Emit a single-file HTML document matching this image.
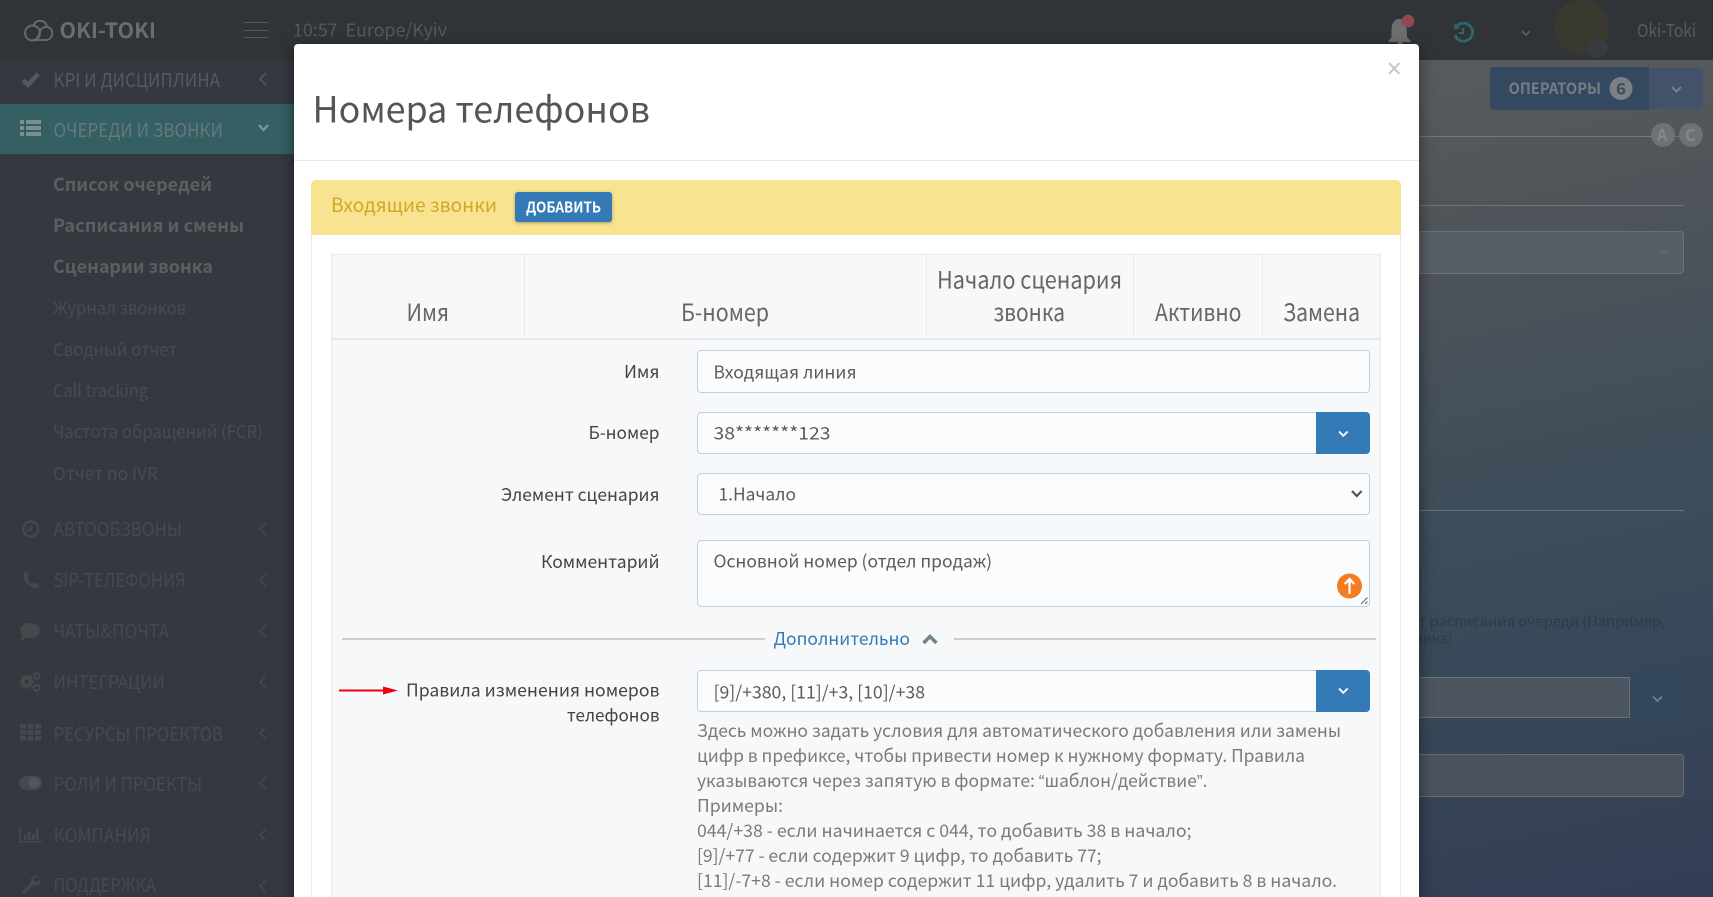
<!DOCTYPE html>
<html lang="ru"><head><meta charset="utf-8"><title>Номера телефонов</title>
<style>
html,body{margin:0;padding:0;width:1713px;height:897px;overflow:hidden;background:#333c55}
#root{position:relative;width:1713px;height:897px;overflow:hidden}
#root div{position:absolute;box-sizing:border-box}
svg{position:absolute;left:0;top:0}
text{font-family:"Noto Sans CJK SC","Liberation Sans",sans-serif;white-space:pre}
#bg{left:1419px;top:60px;width:294px;height:837px;background:linear-gradient(168deg,#585b5d 0,#4b5259 28%,#3d4d5a 52%,#374658 78%,#333c55 100%)}
#side{left:0;top:60px;width:294px;height:837px;background:#35393f}
#act{left:0;top:104px;width:294px;height:50px;background:linear-gradient(90deg,#335f63,#365f63)}
#top{left:0;top:0;width:1713px;height:60px;background:#303338}
#modal{left:294px;top:44px;width:1125px;height:853px;background:#fff;border-radius:4px 4px 0 0;box-shadow:0 5px 15px rgba(0,0,0,.5);overflow:hidden}
.in{background:#fbfcfd;border:1px solid #c3cddf;border-radius:4px}
.btn{background:#337ab7;border-radius:0 4px 4px 0}
</style></head><body>
<div id="root">
<div id="bg"></div>
<div style="left:1490px;top:67px;width:159px;height:43px;background:#34495f;border-radius:3px 0 0 3px"></div>
<div style="left:1649px;top:68px;width:54px;height:41px;background:#42526a;border-radius:0 3px 3px 0"></div>
<div style="left:1419px;top:231px;width:265px;height:43px;background:#575f66;border:1px solid #6d7175;border-radius:0 4px 4px 0"></div>
<div style="left:1419px;top:677px;width:211px;height:41px;background:#4c5560;border:1px solid #6c7177;border-left:0"></div>
<div style="left:1630px;top:677px;width:53px;height:41px;background:#33475d"></div>
<div style="left:1419px;top:754px;width:265px;height:43px;background:#4a525e;border:1px solid #6a6d72;border-left:0;border-radius:0 4px 4px 0"></div>
<div id="side"></div><div id="act"></div><div id="top"></div>

<svg width="1713" height="897" viewBox="0 0 1713 897">
 <!-- logo -->
 <g fill="none" stroke="#66686b" stroke-width="2">
  <circle cx="32.500" cy="33" r="7.500"/>
  <path d="M33.500 25.500a7 7 0 0 1 13.500 1"/>
  <path d="M47 26.800a6.700 6.700 0 0 1-.500 13.200H32.500"/>
  <path d="M47 27a6.700 6.700 0 0 0-7.500 5.500c-.500 3-2 5-3.500 7"/>
 </g>
 <text x="59.500" y="38" textLength="96.500" lengthAdjust="spacingAndGlyphs" font-size="21" font-weight="700" fill="#6a6c70">OKI-TOKI</text>
 <path d="M244 22.500h24M244 30.500h24M244 37.500h24" stroke="#55585c" stroke-width="1"/>
 <text x="293" y="36.500" textLength="154" lengthAdjust="spacingAndGlyphs" font-size="18" fill="#55585c">10:57  Europe/Kyiv</text>

 <!-- main menu -->
 <text x="53.500" y="87" textLength="166.500" lengthAdjust="spacingAndGlyphs" font-size="19" fill="#56595d">KPI И ДИСЦИПЛИНА</text>
 <text x="53.500" y="137" textLength="169.500" lengthAdjust="spacingAndGlyphs" font-size="19" fill="#63797c">ОЧЕРЕДИ И ЗВОНКИ</text>
 <g font-size="18" font-weight="700" fill="#5c5e62">
  <text x="53" y="191" textLength="159" lengthAdjust="spacingAndGlyphs">Список очередей</text>
  <text x="53" y="232" textLength="191" lengthAdjust="spacingAndGlyphs">Расписания и смены</text>
  <text x="53" y="273" textLength="160" lengthAdjust="spacingAndGlyphs">Сценарии звонка</text>
 </g>
 <g font-size="18" fill="#484b50">
  <text x="53" y="314.500" textLength="133" lengthAdjust="spacingAndGlyphs">Журнал звонков</text>
  <text x="53" y="356" textLength="124" lengthAdjust="spacingAndGlyphs">Сводный отчет</text>
  <text x="53" y="397" textLength="95" lengthAdjust="spacingAndGlyphs">Call tracking</text>
  <text x="53" y="438" textLength="210" lengthAdjust="spacingAndGlyphs">Частота обращений (FCR)</text>
  <text x="53" y="480" textLength="105" lengthAdjust="spacingAndGlyphs">Отчет по IVR</text>
 </g>
 <g font-size="19" fill="#46494e">
  <text x="53.500" y="536" textLength="128.500" lengthAdjust="spacingAndGlyphs">АВТООБЗВОНЫ</text>
  <text x="53.500" y="587" textLength="132.500" lengthAdjust="spacingAndGlyphs">SIP-ТЕЛЕФОНИЯ</text>
  <text x="53.500" y="638" textLength="115.500" lengthAdjust="spacingAndGlyphs">ЧАТЫ&amp;ПОЧТА</text>
  <text x="53.500" y="689" textLength="111.500" lengthAdjust="spacingAndGlyphs">ИНТЕГРАЦИИ</text>
  <text x="53.500" y="741" textLength="169.500" lengthAdjust="spacingAndGlyphs">РЕСУРСЫ ПРОЕКТОВ</text>
  <text x="53.500" y="791" textLength="148.500" lengthAdjust="spacingAndGlyphs">РОЛИ И ПРОЕКТЫ</text>
  <text x="53.500" y="842" textLength="97.500" lengthAdjust="spacingAndGlyphs">КОМПАНИЯ</text>
  <text x="53.500" y="892" textLength="102.500" lengthAdjust="spacingAndGlyphs">ПОДДЕРЖКА</text>
 </g>
 <!-- chevrons -->
 <g fill="none" stroke="#43464b" stroke-width="1.800">
  <path d="M266 73l-6 6 6 6" stroke="#505357"/>
  <path d="M266 523l-6 6 6 6M266 574l-6 6 6 6M266 625l-6 6 6 6M266 676l-6 6 6 6M266 727l-6 6 6 6M266 777l-6 6 6 6M266 829l-6 6 6 6M266 880l-6 6 6 6"/>
 </g>
 <path d="M259 125l4.500 5 4.500-5" fill="none" stroke="#7c9699" stroke-width="2.200"/>
 <!-- sidebar icons -->
 <path d="M23 80l5 5 10-11" fill="none" stroke="#55585c" stroke-width="4.500"/>
 <g fill="#7a8f90">
  <rect x="20" y="120" width="4" height="4"/><rect x="26" y="120" width="15" height="4"/>
  <rect x="20" y="126" width="4" height="4"/><rect x="26" y="126" width="15" height="4"/>
  <rect x="20" y="132" width="4" height="4"/><rect x="26" y="132" width="15" height="4"/>
 </g>
 <g fill="#45484d" stroke="none">
  <path d="M24 572.500c1.500-1.500 3-1 4 1l1 3c.3 1-1 2-1.500 3 1 2 2.500 3.500 4.500 4.500 1-.5 2-2 3-1.500l3 1.500c1.500 1 1.500 2.500 0 3.500-3 1.500-7 0-10.500-3.500S22 575.500 24 572.500z"/>
  <path d="M30 623c5.800 0 10 3.400 10 7.500s-4.200 7.500-10 7.500c-1 0-2 0-3-.300-2 1.600-4 2.300-7 2.300 2-1.500 2.500-2.800 2.500-4.500-1.600-1.300-2.500-3-2.500-5 0-4.100 4.200-7.500 10-7.500z"/>
  <rect x="20" y="724" width="6" height="4.500"/><rect x="27.500" y="724" width="6" height="4.500"/><rect x="35" y="724" width="6" height="4.500"/>
  <rect x="20" y="730" width="6" height="4.500"/><rect x="27.500" y="730" width="6" height="4.500"/><rect x="35" y="730" width="6" height="4.500"/>
  <rect x="20" y="736" width="6" height="4.500"/><rect x="27.500" y="736" width="6" height="4.500"/><rect x="35" y="736" width="6" height="4.500"/>
  <rect x="19" y="776" width="23" height="14" rx="7"/>
  <rect x="24" y="835" width="2.500" height="5"/><rect x="28" y="832" width="2.500" height="8"/><rect x="32" y="834" width="2.500" height="6"/><rect x="36" y="827" width="2.500" height="13"/>
  <rect x="19" y="841" width="23" height="1.300"/><rect x="19" y="827" width="1.300" height="15"/>
  <path d="M39 876c-3-1-7 0-8 3-.500 1.500-.300 2.500 0 3.500l-8 8c-1.500 1.500 .500 4 2.500 2.500l8-8c3 1 6 0 7-3 .500-1 .500-2 .300-3l-3.500 3-3-1-.800-3z"/>
 </g>
 <g fill="none" stroke="#45484d">
  <circle cx="30.700" cy="529" r="7.500" stroke-width="2.200"/><path d="M31.500 524.500v5.500h-5" stroke-width="1.600"/>
  <circle cx="26.700" cy="681.700" r="4.200" stroke-width="4"/>
  <path d="M26.700 673.700v16M18.700 681.700h16M21 676l11.400 11.400M32.400 676L21 687.400" stroke-width="1.800" stroke-dasharray="2.200 11.800"/>
  <circle cx="36.700" cy="676" r="2.800" stroke-width="2.200"/>
  <circle cx="36.700" cy="687.700" r="2.800" stroke-width="2.200"/>
 </g>
 <circle cx="34" cy="783" r="5.500" fill="#53575b"/>
 <!-- top right -->
 <path d="M1388 42l3.500-5v-8c0-5.500 3-9 6-10 3-.500 7.500 1 9 5.500l.500 12.500 4.500 5h-8.500c-.500 3-4.500 3-5.500 0z" fill="#6c6e70"/>
 <circle cx="1408" cy="21" r="6.300" fill="#8f4a4f"/>
 <g fill="none" stroke="#2a6a6e" stroke-width="2.800">
  <path d="M1457 26a9 9 0 1 1-2 9"/><path d="M1463 28v5h-4" stroke-width="2"/>
 </g>
 <path d="M1454 23l.500 6h5.500z" fill="#2a6a6e"/>
 <path d="M1522 31l4 4 4-4" fill="none" stroke="#5a5d60" stroke-width="1.800"/>
 <circle cx="1581.500" cy="27.500" r="27.500" fill="#3a392f"/>
 <circle cx="1597.500" cy="48" r="10" fill="#383b3f"/>
 <text x="1637" y="37" textLength="59" lengthAdjust="spacingAndGlyphs" font-size="18" fill="#585b5f">Oki-Toki</text>
 <text x="1508.500" y="94" textLength="92.500" lengthAdjust="spacingAndGlyphs" font-size="15.500" font-weight="700" fill="#777d85">ОПЕРАТОРЫ</text>
 <circle cx="1621" cy="88.500" r="11.500" fill="#7c7f83"/>
 <text x="1616" y="94.500" textLength="10" lengthAdjust="spacingAndGlyphs" font-size="16" font-weight="700" fill="#3c4a5b">6</text>
 <path d="M1672 87l4.500 4.500 4.500-4.500" fill="none" stroke="#7d8692" stroke-width="1.800"/>
 <path d="M1419 136.500h262" stroke="#7b7671"/>
 <circle cx="1663" cy="135" r="12" fill="#6e7175"/><circle cx="1691" cy="135" r="12" fill="#6e7175"/>
 <text x="1657" y="141" font-size="16" font-weight="700" fill="#85878a">A</text>
 <text x="1685" y="141" font-size="16" font-weight="700" fill="#85878a">C</text>
 <path d="M1419 205.500h265" stroke="#76716d"/>
 <path d="M1659 250h10l-5 5z" fill="#66625f"/>
 <path d="M1419 510.500h265" stroke="#6e7378"/>
 <path d="M1653 696.500l4.500 4.500 4.500-4.500" fill="none" stroke="#77808b" stroke-width="1.800"/>
 <text x="1410" y="626.500" textLength="255" lengthAdjust="spacingAndGlyphs" font-size="14.500" fill="#2f3a46">от расписания очереди (Например,</text>
 <text x="1400" y="643.500" textLength="52" lengthAdjust="spacingAndGlyphs" font-size="14.500" fill="#2f3a46">ервина)</text>
</svg>

<div id="modal">
 <div style="left:0;top:116px;width:1125px;height:1px;background:#e8e9eb"></div>
 <div style="left:17px;top:136px;width:1089.500px;height:717px;border:1px solid #e9ecef;border-bottom:0;border-radius:5px 5px 0 0;background:#fff"></div>
 <div style="left:17px;top:136px;width:1089.500px;height:55px;background:#f8e391;border-radius:5px 5px 0 0"></div>
 <div style="left:221px;top:148px;width:97px;height:30px;background:#337ab7;border-radius:3px;box-shadow:0 1px 3px rgba(0,0,0,.3)"></div>
 <div style="left:37px;top:210px;width:1050px;height:643px;background:#f7f8fa;border:1px solid #e7eaee;border-bottom:0"></div>
 <div style="left:37px;top:294px;width:1050px;height:2px;background:#e7e9ec"></div>
 <div style="left:230px;top:210px;width:1px;height:85px;background:#e7e9ec"></div>
 <div style="left:631.500px;top:210px;width:1px;height:85px;background:#e7e9ec"></div>
 <div style="left:839px;top:210px;width:1px;height:85px;background:#e7e9ec"></div>
 <div style="left:968px;top:210px;width:1px;height:85px;background:#e7e9ec"></div>

 <div class="in" style="left:403px;top:306px;width:673px;height:43px"></div>
 <div class="in" style="left:403px;top:368px;width:673px;height:42px"></div>
 <div class="btn" style="left:1022px;top:368px;width:54px;height:42px"></div>
 <div class="in" style="left:403px;top:429px;width:673px;height:42px"></div>
 <div class="in" style="left:403px;top:496px;width:673px;height:67px"></div>
 <div style="left:48px;top:594px;width:423px;height:2px;background:#cdd0d3"></div>
 <div style="left:660px;top:594px;width:422px;height:2px;background:#cdd0d3"></div>
 <div class="in" style="left:403px;top:626px;width:673px;height:42px"></div>
 <div class="btn" style="left:1022px;top:626px;width:54px;height:42px"></div>
</div>

<svg width="1713" height="897" viewBox="0 0 1713 897">
 <text x="312.500" y="122.500" textLength="337.500" lengthAdjust="spacingAndGlyphs" font-size="36" fill="#555">Номера телефонов</text>
 <path d="M1389 63l10.500 11M1399.500 63l-10.500 11" stroke="#c8c8c8" stroke-width="2"/>
 <text x="331" y="212" textLength="166" lengthAdjust="spacingAndGlyphs" font-size="19.500" fill="#cfa925">Входящие звонки</text>
 <text x="526" y="212.500" textLength="75" lengthAdjust="spacingAndGlyphs" font-size="14.500" font-weight="700" fill="#fff">ДОБАВИТЬ</text>
 <g font-size="24" fill="#666">
  <text x="406.500" y="321" textLength="42.500" lengthAdjust="spacingAndGlyphs">Имя</text>
  <text x="681" y="321" textLength="88" lengthAdjust="spacingAndGlyphs">Б-номер</text>
  <text x="937" y="288.500" textLength="185" lengthAdjust="spacingAndGlyphs">Начало сценария</text>
  <text x="993.500" y="321" textLength="71.500" lengthAdjust="spacingAndGlyphs">звонка</text>
  <text x="1155" y="321" textLength="86.500" lengthAdjust="spacingAndGlyphs">Активно</text>
  <text x="1283" y="321" textLength="77" lengthAdjust="spacingAndGlyphs">Замена</text>
 </g>
 <g font-size="17.500" fill="#444">
  <text x="624" y="378" textLength="35.500" lengthAdjust="spacingAndGlyphs">Имя</text>
  <text x="588.500" y="439" textLength="71" lengthAdjust="spacingAndGlyphs">Б-номер</text>
  <text x="501" y="501" textLength="158.500" lengthAdjust="spacingAndGlyphs">Элемент сценария</text>
  <text x="541" y="568" textLength="118.500" lengthAdjust="spacingAndGlyphs">Комментарий</text>
  <text x="406" y="696.500" textLength="253.500" lengthAdjust="spacingAndGlyphs">Правила изменения номеров</text>
  <text x="567" y="721.500" textLength="92.500" lengthAdjust="spacingAndGlyphs">телефонов</text>
 </g>
 <g font-size="17.500" fill="#5c5c5c">
  <text x="713.500" y="378.500" textLength="143" lengthAdjust="spacingAndGlyphs">Входящая линия</text>
  <text x="713.500" y="439.500" textLength="117" lengthAdjust="spacingAndGlyphs">38*******123</text>
  <text x="718.500" y="500.500" textLength="77.500" lengthAdjust="spacingAndGlyphs">1.Начало</text>
  <text x="713.500" y="567.500" textLength="278.500" lengthAdjust="spacingAndGlyphs">Основной номер (отдел продаж)</text>
  <text x="713.500" y="698.500" textLength="211.500" lengthAdjust="spacingAndGlyphs">[9]/+380, [11]/+3, [10]/+38</text>
 </g>
 <path d="M1352 491l4.800 5 4.800-5" fill="none" stroke="#555" stroke-width="2.200"/>
 <path d="M1339 431.500l4.300 4.300 4.300-4.300M1339 688.500l4.300 4.300 4.300-4.300" fill="none" stroke="#fff" stroke-width="1.800"/>
 <circle cx="1349.500" cy="586" r="12.500" fill="#f57c20"/>
 <path d="M1349.500 594v-14M1344.800 584l4.700-5 4.700 5" fill="none" stroke="#fff" stroke-width="2.200"/>
 <path d="M1361 604l6.500-6.500M1365 604l2.500-2.500" stroke="#666" stroke-width="1"/>
 <text x="773.500" y="645" textLength="136.500" lengthAdjust="spacingAndGlyphs" font-size="17.500" fill="#337ab7">Дополнительно</text>
 <path d="M923.500 643l6.500-6.500 6.500 6.500" fill="none" stroke="#6f8484" stroke-width="3.500"/>
 <path d="M339 690.500h46" stroke="#f00010" stroke-width="2"/>
 <path d="M383 686.500l15 4-15 4z" fill="#f00010"/>
 <g font-size="17.500" fill="#7a7a7a">
  <text x="697" y="737" textLength="644" lengthAdjust="spacingAndGlyphs">Здесь можно задать условия для автоматического добавления или замены</text>
  <text x="697" y="762" textLength="608" lengthAdjust="spacingAndGlyphs">цифр в префиксе, чтобы привести номер к нужному формату. Правила</text>
  <text x="697" y="787" textLength="510.500" lengthAdjust="spacingAndGlyphs">указываются через запятую в формате: <tspan font-family="Liberation Sans">“</tspan>шаблон/действие<tspan font-family="Liberation Sans">”</tspan>.</text>
  <text x="697" y="812" textLength="86" lengthAdjust="spacingAndGlyphs">Примеры:</text>
  <text x="697" y="837" textLength="494.500" lengthAdjust="spacingAndGlyphs">044/+38 - если начинается с 044, то добавить 38 в начало;</text>
  <text x="697" y="862" textLength="404.500" lengthAdjust="spacingAndGlyphs">[9]/+77 - если содержит 9 цифр, то добавить 77;</text>
  <text x="697" y="887" textLength="640" lengthAdjust="spacingAndGlyphs">[11]/-7+8 - если номер содержит 11 цифр, удалить 7 и добавить 8 в начало.</text>
 </g>
</svg>
</div>
</body></html>
